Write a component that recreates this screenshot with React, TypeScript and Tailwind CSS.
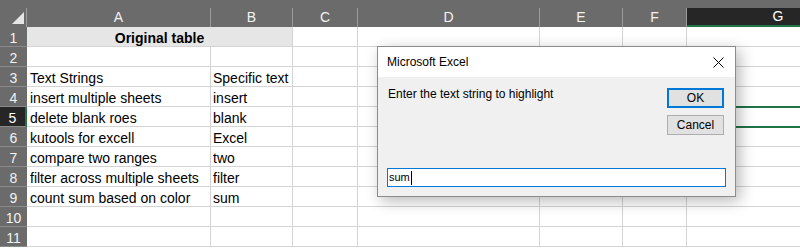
const COLS = [
  { key: "A", w: "w-[184px]" },
  { key: "B", w: "w-[82px]" },
  { key: "C", w: "w-[65px]" },
  { key: "D", w: "w-[182px]" },
  { key: "E", w: "w-[83px]" },
  { key: "F", w: "w-[64px]" },
  { key: "G", w: "w-[182px]" },
];

const ROWS: { a?: string; b?: string }[] = [
  {},
  {},
  { a: "Text Strings", b: "Specific text" },
  { a: "insert multiple sheets", b: "insert" },
  { a: "delete blank roes", b: "blank" },
  { a: "kutools for excell", b: "Excel" },
  { a: "compare two ranges", b: "two" },
  { a: "filter across multiple sheets", b: "filter" },
  { a: "count sum based on color", b: "sum" },
  {},
  {},
];

function ColumnHeaders() {
  return (
    <div className="flex h-[27px] shrink-0 bg-[#6b6b6b] pt-[8px]">
      <div className="relative w-[27px] shrink-0 border-r border-[#9a9a9a]">
        <svg className="absolute right-[2px] bottom-[3px]" width="12" height="12" viewBox="0 0 12 12">
          <polygon points="12,0 12,12 0,12" fill="#e6e6e6" />
        </svg>
      </div>
      {COLS.map((c) =>
        c.key === "G" ? (
          <div
            key={c.key}
            className={`${c.w} shrink-0 flex items-center justify-center bg-[#262626] border-b-2 border-[#217346] text-[14px] text-white`}
          >
            {c.key}
          </div>
        ) : (
          <div
            key={c.key}
            className={`${c.w} shrink-0 flex items-center justify-center border-r border-[#9a9a9a] text-[14px] text-[#f2f2f2]`}
          >
            {c.key}
          </div>
        )
      )}
    </div>
  );
}

function Row({ n, a, b }: { n: number; a?: string; b?: string }) {
  const selected = n === 5;
  return (
    <div className="flex h-[20px] shrink-0">
      <div
        className={
          selected
            ? "w-[27px] shrink-0 flex items-center justify-center pt-[3px] bg-[#262626] border-r-2 border-[#217346] border-b border-b-[#8a8a8a] text-[14px] text-white"
            : "w-[27px] shrink-0 flex items-center justify-center pt-[3px] bg-[#6b6b6b] border-b border-[#8a8a8a] text-[14px] text-[#f2f2f2]"
        }
      >
        {n}
      </div>
      {n === 1 ? (
        <div className="w-[266px] shrink-0 flex items-center justify-center pt-[3px] bg-[#e7e6e6] border-r border-b border-[#d4d4d4] text-[14px] font-bold text-black">
          Original table
        </div>
      ) : (
        <>
          <div className="w-[184px] shrink-0 flex items-center pl-[3px] pt-[3px] border-r border-b border-[#d4d4d4] text-[14px] text-black whitespace-nowrap">
            {a}
          </div>
          <div className="w-[82px] shrink-0 flex items-center pl-[2px] pt-[3px] border-r border-b border-[#d4d4d4] text-[14px] text-black whitespace-nowrap">
            {b}
          </div>
        </>
      )}
      {COLS.slice(2).map((c) => (
        <div key={c.key} className={`${c.w} shrink-0 border-r border-b border-[#d4d4d4]`} />
      ))}
    </div>
  );
}

function Dialog() {
  return (
    <div className="absolute left-[377px] top-[46px] w-[359px] h-[151px] flex flex-col border border-[#8c8c8c] bg-[#f0f0f0] shadow-[4px_4px_14px_rgba(0,0,0,0.28)]">
      <div className="h-[30px] shrink-0 flex items-center justify-between bg-white pl-[9px] pr-[11px]">
        <span className="text-[12px] text-black">Microsoft Excel</span>
        <svg width="11" height="11" viewBox="0 0 11 11">
          <path d="M0.5 0.5 L10.5 10.5 M10.5 0.5 L0.5 10.5" stroke="#000" strokeWidth="1" fill="none" />
        </svg>
      </div>
      <div className="flex-1 flex flex-col px-[9px] pt-[11px] pb-[9px]">
        <div className="flex justify-between">
          <div className="pl-[1px] -mt-[1px] text-[12px] leading-[14px] text-black">
            Enter the text string to highlight
          </div>
          <div className="flex flex-col gap-[7px] mr-[2px]">
            <div className="w-[57px] h-[20px] flex items-center justify-center border-2 border-[#0078d7] bg-[#e1e1e1] text-[12px] text-black">
              OK
            </div>
            <div className="w-[57px] h-[20px] flex items-center justify-center border border-[#adadad] bg-[#e1e1e1] text-[12px] text-black">
              Cancel
            </div>
          </div>
        </div>
        <div className="flex-1" />
        <div className="h-[19px] flex items-center border border-[#0078d7] bg-white pl-[1px] text-[11px] text-black">
          sum
          <span className="ml-[1px] w-[1px] h-[14px] bg-black" />
        </div>
      </div>
    </div>
  );
}

export default function App() {
  return (
    <div className="relative w-[800px] h-[248px] overflow-hidden bg-white font-['Liberation_Sans',Arial,sans-serif]">
      <div className="flex flex-col">
        <ColumnHeaders />
        {ROWS.map((r, i) => (
          <Row key={i} n={i + 1} a={r.a} b={r.b} />
        ))}
      </div>
      {/* active cell G5 */}
      <div className="absolute left-[686px] top-[106px] w-[130px] h-[22px] border-2 border-[#217346]" />
      <Dialog />
    </div>
  );
}
